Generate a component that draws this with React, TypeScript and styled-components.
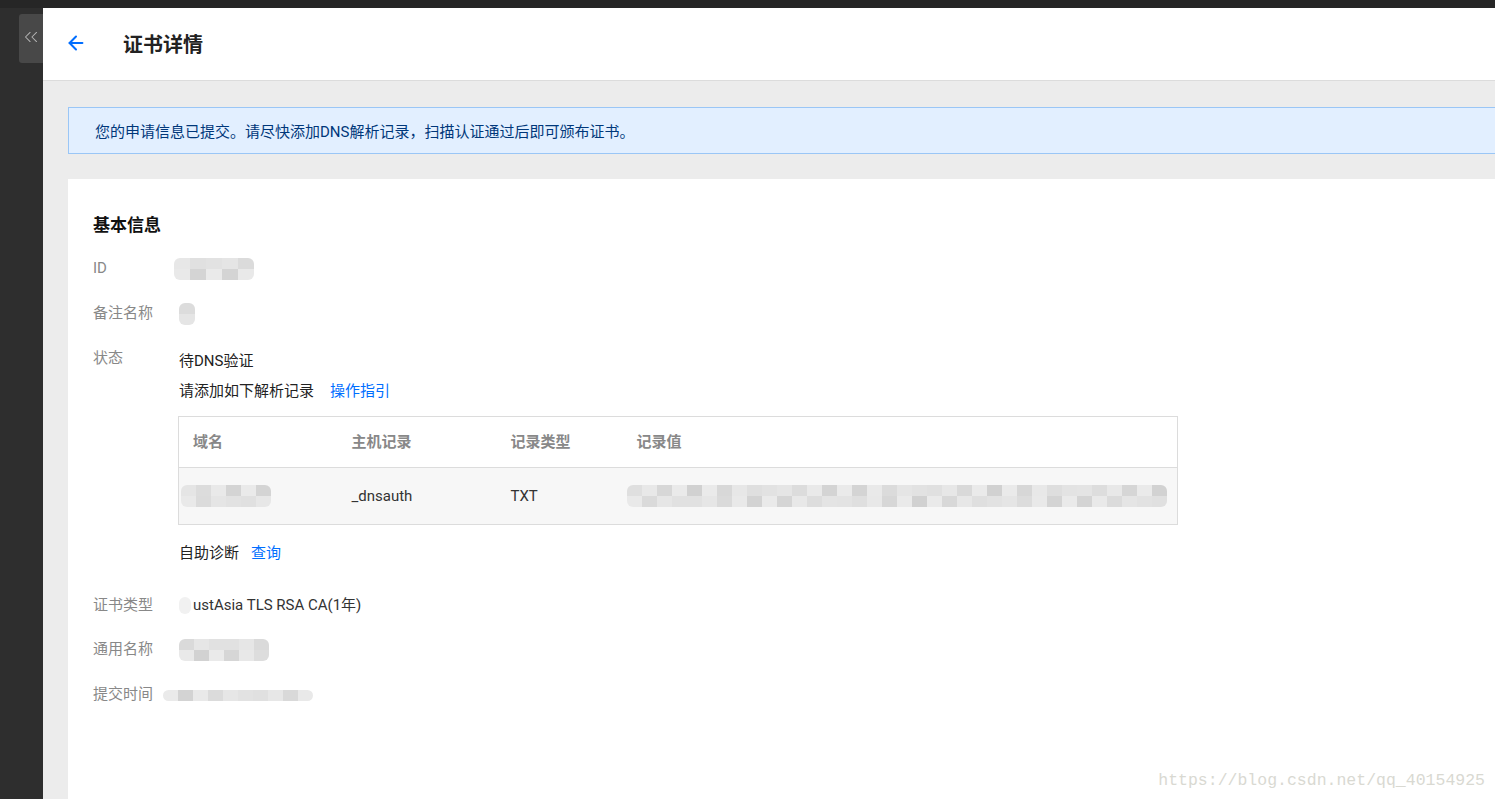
import { FC } from "react";
import styled, { createGlobalStyle } from "styled-components";
import { ArrowLeft, ChevronsLeft } from "lucide-react";

const GlobalStyle = createGlobalStyle`
  html, body {
    margin: 0;
    padding: 0;
    height: 100%;
    overflow: hidden;
  }
  body {
    font-family: Roboto, "Noto Sans CJK SC", sans-serif;
    background: #262626;
  }
  * {
    box-sizing: border-box;
  }
`;

// pixelated blur shades for masked values
const shade = (seed: number, i: number) => {
  const v = Math.abs(Math.sin(seed * 13.1 + i * 7.7)) * 26;
  return 208 + Math.round(v);
};

interface MosaicProps {
  cols: number;
  rows?: number;
  cell?: number;
  seed?: number;
}

const Mosaic: FC<MosaicProps> = ({ cols, rows = 2, cell = 15, seed = 1 }) => {
  const cells = Array.from({ length: cols * rows }, (_, i) => shade(seed, i));
  return (
    <MosaicGrid $cols={cols} $cell={cell}>
      {cells.map((c, i) => (
        <MosaicCell key={i} style={{ background: `rgb(${c},${c},${c})` }} />
      ))}
    </MosaicGrid>
  );
};

const records = [{ domain: 10, host: "_dnsauth", type: "TXT" }];

const App: FC = () => {
  return (
    <>
      <GlobalStyle />
      <Page>
        <Sidebar>
          <Collapse>
            <ChevronsLeft size={22} strokeWidth={1.1} color="#b4b4b4" />
          </Collapse>
        </Sidebar>
        <Main>
          <Header>
            <BackButton>
              <ArrowLeft size={22} strokeWidth={2.2} color="#006eff" />
            </BackButton>
            <Title>证书详情</Title>
          </Header>
          <Content>
            <Alert>您的申请信息已提交。请尽快添加DNS解析记录，扫描认证通过后即可颁布证书。</Alert>
            <Card>
              <SectionTitle>基本信息</SectionTitle>
              <InfoList>
                <Row>
                  <Label>ID</Label>
                  <Value $shift={-5}>
                    <Mosaic cols={5} cell={16} rows={2} seed={2} />
                  </Value>
                </Row>
                <Row>
                  <Label>备注名称</Label>
                  <Value>
                    <Mosaic cols={1} cell={16} rows={2} seed={5} />
                  </Value>
                </Row>
                <Row $gap={22}>
                  <Label>状态</Label>
                  <Value>
                    <Line>待DNS验证</Line>
                    <Line>
                      请添加如下解析记录
                      <Link>操作指引</Link>
                    </Line>
                    <Table>
                      <thead>
                        <tr>
                          <Th $w={159}>域名</Th>
                          <Th $w={159}>主机记录</Th>
                          <Th $w={126}>记录类型</Th>
                          <Th>记录值</Th>
                        </tr>
                      </thead>
                      <tbody>
                        {records.map((r) => (
                          <tr key={r.host}>
                            <Td $pad={2}>
                              <Mosaic cols={6} cell={15} seed={r.domain} />
                            </Td>
                            <Td>{r.host}</Td>
                            <Td>{r.type}</Td>
                            <Td $pad={4}>
                              <Mosaic cols={36} cell={15} seed={7} />
                            </Td>
                          </tr>
                        ))}
                      </tbody>
                    </Table>
                    <Line $top={18}>
                      自助诊断
                      <Link $gap={12}>查询</Link>
                    </Line>
                  </Value>
                </Row>
                <Row>
                  <Label>证书类型</Label>
                  <Value>
                    <TypeText>
                      <Smudge />
                      ustAsia TLS RSA CA(1年)
                    </TypeText>
                  </Value>
                </Row>
                <Row>
                  <Label>通用名称</Label>
                  <Value>
                    <Mosaic cols={6} cell={15} seed={11} />
                  </Value>
                </Row>
                <Row>
                  <Label>提交时间</Label>
                  <Value $shift={-16}>
                    <Mosaic cols={10} cell={15} rows={1} seed={3} />
                  </Value>
                </Row>
              </InfoList>
            </Card>
          </Content>
        </Main>
        <Watermark>https://blog.csdn.net/qq_40154925</Watermark>
      </Page>
    </>
  );
};

export default App;

const Page = styled.div`
  position: relative;
  display: flex;
  height: 100vh;
  padding-top: 8px;
  background: #262626;
`;

const Sidebar = styled.aside`
  width: 43px;
  flex-shrink: 0;
  background: #2e2e2e;
  padding-top: 6px;
  display: flex;
  justify-content: flex-end;
`;

const Collapse = styled.div`
  width: 24px;
  height: 49px;
  background: #484848;
  border-radius: 3px 0 0 3px;
  display: flex;
  align-items: center;
  justify-content: center;
  align-self: flex-start;
  padding-bottom: 4px;
  overflow: hidden;
`;

const Main = styled.main`
  flex: 1;
  display: flex;
  flex-direction: column;
  background: #ececec;
  min-width: 0;
`;

const Header = styled.header`
  height: 73px;
  flex-shrink: 0;
  background: #fff;
  border-bottom: 1px solid #dcdcdc;
  display: flex;
  align-items: center;
  padding-left: 22px;
  padding-bottom: 2px;
`;

const BackButton = styled.div`
  display: flex;
  align-items: center;
  width: 58px;
`;

const Title = styled.h1`
  margin: 0;
  font-size: 20px;
  font-weight: bold;
  color: #222;
`;

const Content = styled.div`
  flex: 1;
  display: flex;
  flex-direction: column;
  padding: 26px 0 0 25px;
  gap: 25px;
`;

const Alert = styled.div`
  height: 47px;
  background: #e2efff;
  border: 1px solid #9ac6f6;
  border-right: none;
  color: #00377a;
  font-size: 15px;
  display: flex;
  align-items: center;
  padding-left: 26px;
`;

const Card = styled.section`
  flex: 1;
  background: #fff;
  padding: 35px 0 0 25px;
`;

const SectionTitle = styled.h2`
  margin: 0 0 22px;
  font-size: 17px;
  font-weight: bold;
  color: #111;
  line-height: 22px;
`;

const InfoList = styled.div`
  display: flex;
  flex-direction: column;
`;

const Row = styled.div<{ $gap?: number }>`
  display: flex;
  align-items: flex-start;
  margin-bottom: ${(p) => p.$gap ?? 23}px;
  font-size: 15px;
  line-height: 21px;
`;

const Label = styled.div`
  width: 86px;
  flex-shrink: 0;
  color: #888;
`;

const Value = styled.div<{ $shift?: number }>`
  flex: 1;
  color: #222;
  margin-left: ${(p) => p.$shift ?? 0}px;
  min-height: 21px;
`;

const Line = styled.div<{ $top?: number }>`
  margin-top: ${(p) => p.$top ?? 0}px;
  margin-bottom: 9px;
  line-height: 21px;
  &:first-child {
    margin-top: 3px;
  }
`;

const Link = styled.span<{ $gap?: number }>`
  color: #006eff;
  margin-left: ${(p) => p.$gap ?? 16}px;
  cursor: pointer;
`;

const Table = styled.table`
  width: 1000px;
  margin-left: -1px;
  margin-top: 14px;
  border: 1px solid #dcdcdc;
  border-collapse: collapse;
  font-size: 15px;
`;

const Th = styled.th<{ $w?: number }>`
  width: ${(p) => (p.$w ? `${p.$w}px` : "auto")};
  height: 51px;
  text-align: left;
  padding: 0 14px;
  color: #888;
  font-weight: bold;
`;

const Td = styled.td<{ $pad?: number }>`
  height: 57px;
  padding: 0 ${(p) => p.$pad ?? 14}px;
  background: #f7f7f7;
  border-top: 1px solid #dcdcdc;
  color: #333;
`;

const MosaicGrid = styled.div<{ $cols: number; $cell: number }>`
  display: inline-grid;
  grid-template-columns: repeat(${(p) => p.$cols}, ${(p) => p.$cell}px);
  grid-auto-rows: ${(p) => Math.round(p.$cell * 0.7)}px;
  border-radius: 6px;
  overflow: hidden;
  filter: blur(0.5px);
  vertical-align: middle;
`;

const MosaicCell = styled.div``;

const TypeText = styled.div`
  display: flex;
  align-items: center;
  color: #333;
`;

const Smudge = styled.span`
  width: 12px;
  height: 17px;
  border-radius: 6px;
  background: #f1f1f1;
  margin-right: 2px;
`;

const Watermark = styled.div`
  position: absolute;
  right: 10px;
  bottom: 9px;
  font-family: "Liberation Mono", monospace;
  font-size: 16.5px;
  color: #d9d9d2;
  pointer-events: none;
`;
